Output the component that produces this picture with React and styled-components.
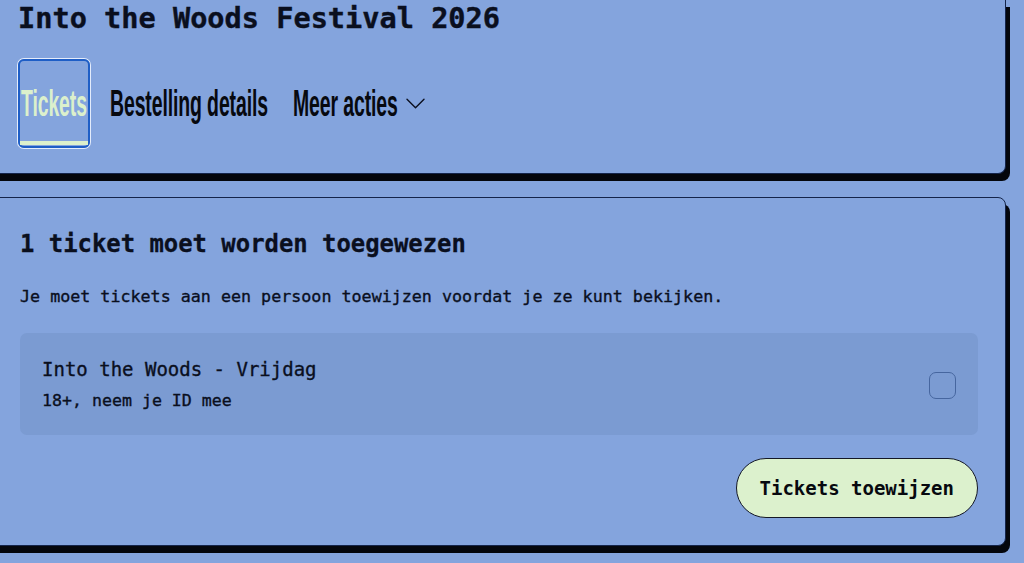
import React from "react";
import styled, { createGlobalStyle } from "styled-components";

const Global = createGlobalStyle`
  html, body { margin: 0; padding: 0; background: #84a4dd; }
  body { font-family: "DejaVu Sans Mono", monospace; color: #0a0f1e; overflow: hidden; }
  * { box-sizing: border-box; }
`;

const Page = styled.div`
  display: flex;
  flex-direction: column;
  gap: 23px;
  padding: 0 18px 0 0;
  width: 1024px;
  height: 563px;
  overflow: hidden;
`;

const Card = styled.section`
  margin-left: -12px;
  background: #84a4dd;
  border: 1px solid #14244a;
  border-radius: 8px;
  box-shadow: 4px 7px 0 0 #04060c;
`;

const HeaderCard = styled(Card)`
  border-top-width: 0;
  border-radius: 0 0 8px 8px;
  padding: 0 27px 25px 29px;
`;

const Title = styled.h1`
  margin: 0;
  font-size: 28.6px;
  line-height: 36px;
  font-weight: bold;
  -webkit-text-stroke: 0.4px #0a0f1e;
`;

const Nav = styled.nav`
  display: flex;
  align-items: stretch;
  gap: 17px;
  margin-top: 23px;
  height: 89px;
`;

const NavItem = styled.div`
  position: relative;
  display: flex;
  align-items: center;
  gap: 5px;
  padding: 0 1px;
  border: 2px solid ${(p) => (p.$active ? "#1e5ec6" : "transparent")};
  border-radius: 6px;
  box-shadow: ${(p) => (p.$active ? "0 0 0 1px #e4ecfb" : "none")};
  color: ${(p) => (p.$active ? "#dcf0cc" : "#07090f")};
  &::after {
    content: "";
    display: ${(p) => (p.$active ? "block" : "none")};
    position: absolute;
    left: 0;
    right: 0;
    bottom: 1px;
    height: 4px;
    background: #dcf0cc;
  }
`;

const Label = styled.span`
  display: inline-block;
  width: ${(p) => p.$w}px;
  white-space: nowrap;
  overflow: visible;
`;

const Squeeze = styled.span`
  display: inline-block;
  font-family: "Liberation Sans", Arial, sans-serif;
  font-weight: bold;
  font-size: 36px;
  letter-spacing: -0.2px;
  transform: scaleX(0.54);
  transform-origin: left center;
`;

const Chevron = () => (
  <svg width="19" height="11" viewBox="0 0 19 11" fill="none">
    <path d="M1 1.2 L9.5 9.7 L18 1.2" stroke="#0a0f1e" strokeWidth="1.4" strokeLinecap="round" strokeLinejoin="round" />
  </svg>
);

const ContentCard = styled(Card)`
  display: flex;
  flex-direction: column;
  padding: 30px 27px 27px 31px;
`;

const Heading = styled.h2`
  margin: 0;
  font-size: 23.9px;
  line-height: 32px;
  font-weight: bold;
  -webkit-text-stroke: 0.3px #0a0f1e;
`;

const Text = styled.p`
  margin: 24px 0 0;
  font-size: 16.7px;
  line-height: 24px;
  -webkit-text-stroke: 0.35px #0a0f1e;
`;

const TicketRow = styled.div`
  display: flex;
  align-items: center;
  justify-content: space-between;
  margin-top: 25px;
  padding: 24px 22px 22px 22px;
  background: #7b9bd2;
  border-radius: 7px;
`;

const TicketInfo = styled.div`
  display: flex;
  flex-direction: column;
  gap: 8px;
  -webkit-text-stroke: 0.35px #0a0f1e;
`;

const TicketName = styled.div`
  font-size: 19px;
  line-height: 24px;
`;

const TicketNote = styled.div`
  font-size: 16.6px;
  line-height: 24px;
`;

const Check = styled.span`
  width: 27px;
  height: 27px;
  border: 1.5px solid #46669f;
  border-radius: 7px;
`;

const Actions = styled.div`
  display: flex;
  justify-content: flex-end;
  margin-top: 23px;
`;

const Button = styled.button`
  height: 60px;
  padding: 0 23px;
  border: 1.5px solid #141826;
  border-radius: 30px;
  background: #dcf1cd;
  color: #07090f;
  font-family: "DejaVu Sans Mono", monospace;
  font-weight: bold;
  font-size: 19px;
  cursor: pointer;
`;

export default function App() {
  return (
    <>
      <Global />
      <Page>
        <HeaderCard>
          <Title>Into the Woods Festival 2026</Title>
          <Nav>
            <NavItem $active>
              <Label $w={66}><Squeeze>Tickets</Squeeze></Label>
            </NavItem>
            <NavItem>
              <Label $w={160}><Squeeze>Bestelling details</Squeeze></Label>
            </NavItem>
            <NavItem>
              <Label $w={108}><Squeeze>Meer acties</Squeeze></Label>
              <Chevron />
            </NavItem>
          </Nav>
        </HeaderCard>
        <ContentCard>
          <Heading>1 ticket moet worden toegewezen</Heading>
          <Text>Je moet tickets aan een persoon toewijzen voordat je ze kunt bekijken.</Text>
          <TicketRow>
            <TicketInfo>
              <TicketName>Into the Woods - Vrijdag</TicketName>
              <TicketNote>18+, neem je ID mee</TicketNote>
            </TicketInfo>
            <Check />
          </TicketRow>
          <Actions>
            <Button>Tickets toewijzen</Button>
          </Actions>
        </ContentCard>
      </Page>
    </>
  );
}
